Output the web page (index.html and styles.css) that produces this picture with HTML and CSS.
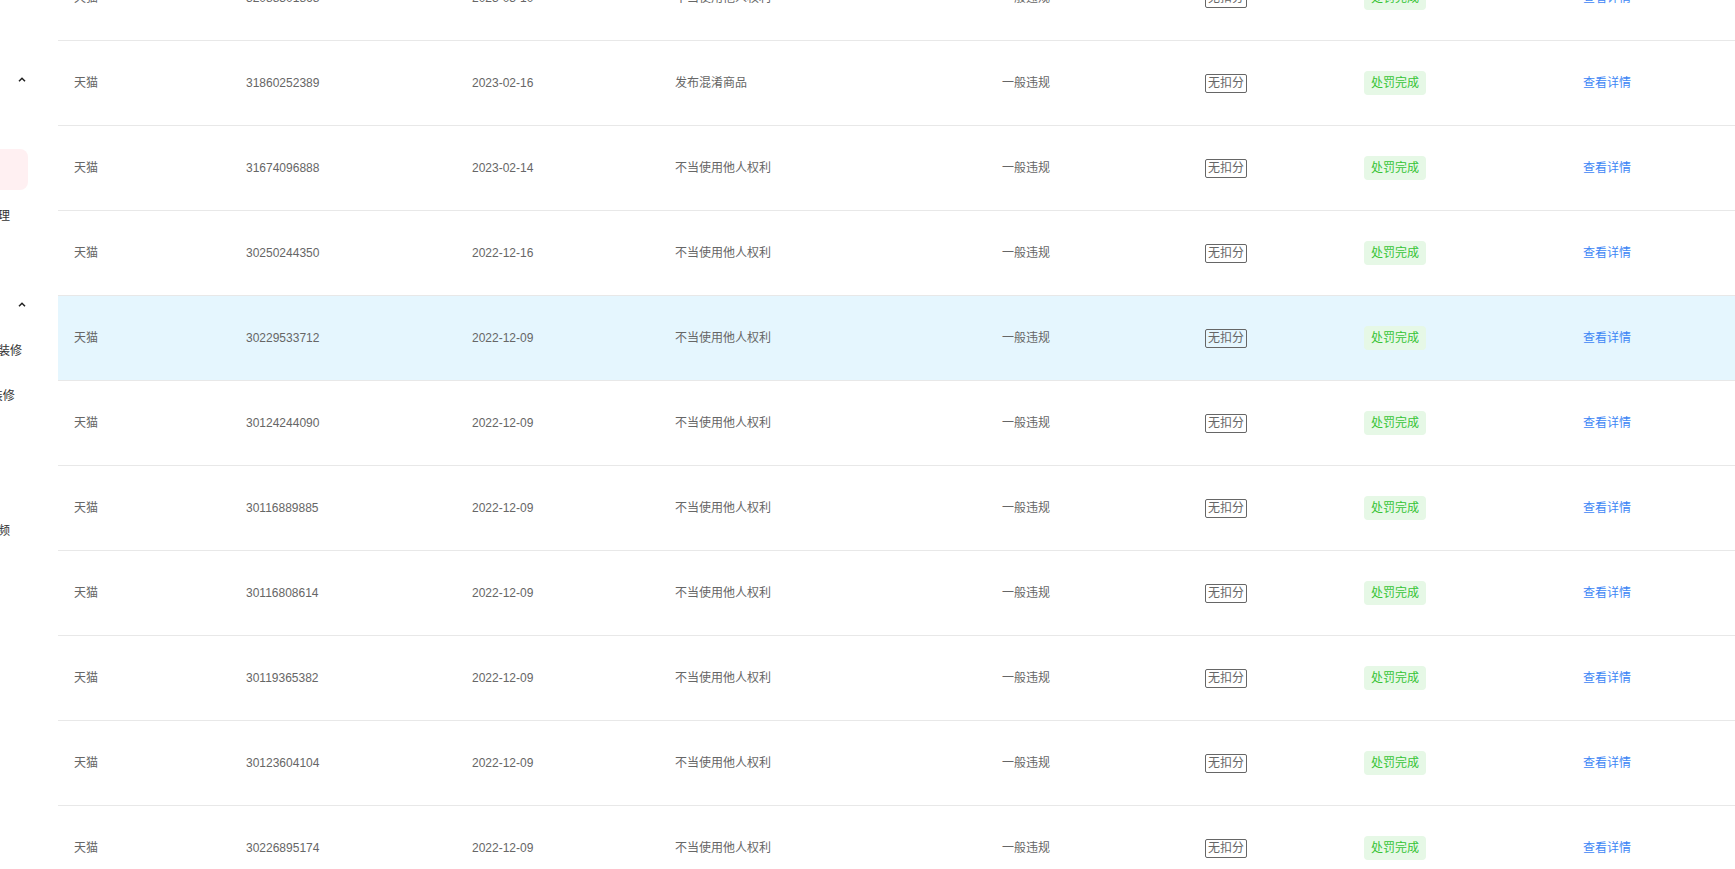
FILE: index.html
```html
<!DOCTYPE html>
<html lang="zh-CN">
<head>
<meta charset="utf-8">
<title>违规记录</title>
<link rel="stylesheet" href="styles.css">
</head>
<body>
<div class="app">
  <aside class="sidebar">
    <div class="menu">
      <div class="menu-head"><span class="head-label">体检</span><svg class="caret" width="8" height="5" viewBox="0 0 8 5"><path d="M1 4.3 L4 1.3 L7 4.3" stroke="#222" stroke-width="1.5" fill="none"/></svg></div>
      <div class="menu-item">首页</div>
      <div class="menu-item active">违规</div>
      <div class="menu-item">待处理</div>
      <div class="menu-item">申诉</div>
      <div class="menu-head"><span class="head-label">装修</span><svg class="caret" width="8" height="5" viewBox="0 0 8 5"><path d="M1 4.3 L4 1.3 L7 4.3" stroke="#222" stroke-width="1.5" fill="none"/></svg></div>
      <div class="menu-item">店铺装修</div>
      <div class="menu-item">PC装修</div>
      <div class="menu-item">图片</div>
      <div class="menu-item">素材</div>
      <div class="menu-item">短视频</div>
    </div>
  </aside>
  <main class="main">
    <div class="table">
      <div class="row"><div class="cell">天猫</div><div class="cell">32088301868</div><div class="cell">2023-03-10</div><div class="cell">不当使用他人权利</div><div class="cell">一般违规</div><div class="cell"><span class="score">无扣分</span></div><div class="cell"><span class="status">处罚完成</span></div><div class="cell"><a class="link">查看详情</a></div></div>
      <div class="row"><div class="cell">天猫</div><div class="cell">31860252389</div><div class="cell">2023-02-16</div><div class="cell">发布混淆商品</div><div class="cell">一般违规</div><div class="cell"><span class="score">无扣分</span></div><div class="cell"><span class="status">处罚完成</span></div><div class="cell"><a class="link">查看详情</a></div></div>
      <div class="row"><div class="cell">天猫</div><div class="cell">31674096888</div><div class="cell">2023-02-14</div><div class="cell">不当使用他人权利</div><div class="cell">一般违规</div><div class="cell"><span class="score">无扣分</span></div><div class="cell"><span class="status">处罚完成</span></div><div class="cell"><a class="link">查看详情</a></div></div>
      <div class="row"><div class="cell">天猫</div><div class="cell">30250244350</div><div class="cell">2022-12-16</div><div class="cell">不当使用他人权利</div><div class="cell">一般违规</div><div class="cell"><span class="score">无扣分</span></div><div class="cell"><span class="status">处罚完成</span></div><div class="cell"><a class="link">查看详情</a></div></div>
      <div class="row hover"><div class="cell">天猫</div><div class="cell">30229533712</div><div class="cell">2022-12-09</div><div class="cell">不当使用他人权利</div><div class="cell">一般违规</div><div class="cell"><span class="score">无扣分</span></div><div class="cell"><span class="status">处罚完成</span></div><div class="cell"><a class="link">查看详情</a></div></div>
      <div class="row"><div class="cell">天猫</div><div class="cell">30124244090</div><div class="cell">2022-12-09</div><div class="cell">不当使用他人权利</div><div class="cell">一般违规</div><div class="cell"><span class="score">无扣分</span></div><div class="cell"><span class="status">处罚完成</span></div><div class="cell"><a class="link">查看详情</a></div></div>
      <div class="row"><div class="cell">天猫</div><div class="cell">30116889885</div><div class="cell">2022-12-09</div><div class="cell">不当使用他人权利</div><div class="cell">一般违规</div><div class="cell"><span class="score">无扣分</span></div><div class="cell"><span class="status">处罚完成</span></div><div class="cell"><a class="link">查看详情</a></div></div>
      <div class="row"><div class="cell">天猫</div><div class="cell">30116808614</div><div class="cell">2022-12-09</div><div class="cell">不当使用他人权利</div><div class="cell">一般违规</div><div class="cell"><span class="score">无扣分</span></div><div class="cell"><span class="status">处罚完成</span></div><div class="cell"><a class="link">查看详情</a></div></div>
      <div class="row"><div class="cell">天猫</div><div class="cell">30119365382</div><div class="cell">2022-12-09</div><div class="cell">不当使用他人权利</div><div class="cell">一般违规</div><div class="cell"><span class="score">无扣分</span></div><div class="cell"><span class="status">处罚完成</span></div><div class="cell"><a class="link">查看详情</a></div></div>
      <div class="row"><div class="cell">天猫</div><div class="cell">30123604104</div><div class="cell">2022-12-09</div><div class="cell">不当使用他人权利</div><div class="cell">一般违规</div><div class="cell"><span class="score">无扣分</span></div><div class="cell"><span class="status">处罚完成</span></div><div class="cell"><a class="link">查看详情</a></div></div>
      <div class="row"><div class="cell">天猫</div><div class="cell">30226895174</div><div class="cell">2022-12-09</div><div class="cell">不当使用他人权利</div><div class="cell">一般违规</div><div class="cell"><span class="score">无扣分</span></div><div class="cell"><span class="status">处罚完成</span></div><div class="cell"><a class="link">查看详情</a></div></div>
    </div>
  </main>
</div>
</body>
</html>
```
FILE: styles.css
```css
* { box-sizing: border-box; }
html, body {
  margin: 0;
  padding: 0;
  height: 100%;
  overflow: hidden;
  background: #fff;
  font-family: "Liberation Sans", "Noto Sans CJK SC", sans-serif;
  font-size: 12px;
  color: #666;
}
.app {
  display: flex;
  height: 869px;
  overflow: hidden;
}
.sidebar {
  width: 58px;
  flex: 0 0 58px;
  overflow: hidden;
  background: #fff;
}
.menu {
  margin-left: -40px;
  width: 68px;
  padding-top: 59px;
  display: flex;
  flex-direction: column;
  gap: 4px;
}
.menu-head,
.menu-item {
  height: 41px;
  display: flex;
  align-items: center;
  padding-left: 14px;
  white-space: nowrap;
  color: #333;
  font-size: 12px;
}
.menu-head {
  justify-content: space-between;
  padding-right: 2px;
}
.head-label {
  visibility: hidden;
}
.caret {
  display: block;
  margin-top: -1px;
}
.menu-item.active {
  background: #fff0f2;
  border-radius: 8px;
  color: #ff2d4a;
}
.main {
  flex: 1;
  min-width: 0;
  overflow: hidden;
}
.table {
  margin-top: -44px;
}
.row {
  display: grid;
  grid-template-columns: 172px 226px 203px 327px 203px 159px 219px 168px;
  height: 85px;
  border-bottom: 1px solid #e8e8e8;
  align-items: center;
}
.row.hover {
  background: #e5f6fe;
}
.cell {
  padding-left: 16px;
  white-space: nowrap;
  color: #666;
  line-height: 17px;
}
.score {
  display: inline-block;
  border: 1px solid #666;
  border-radius: 2px;
  padding: 0 2px;
  line-height: 17px;
  color: #666;
}
.status {
  display: inline-block;
  padding: 0 7px;
  line-height: 24px;
  border-radius: 4px;
  background: #e6f8e6;
  color: #36c436;
}
.link {
  color: #3d86f5;
  cursor: pointer;
  text-decoration: none;
}
```
